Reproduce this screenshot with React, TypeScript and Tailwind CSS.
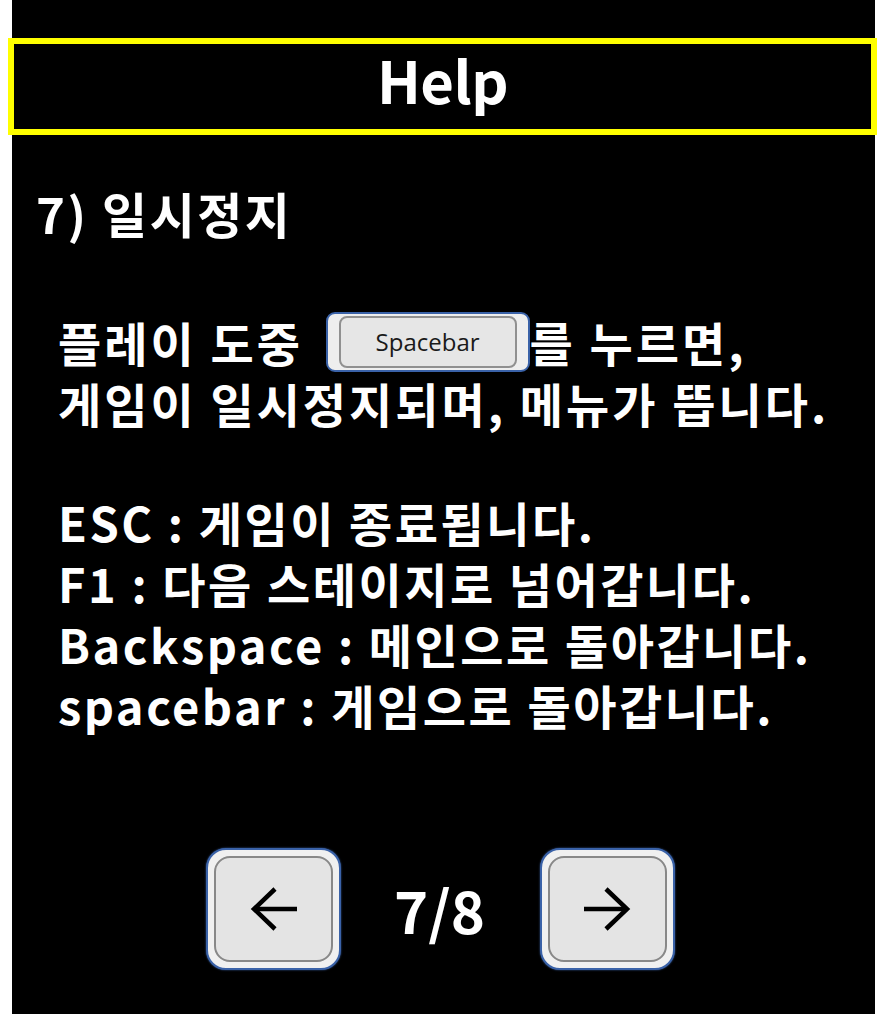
import React from "react";

const font = { fontFamily: '"Noto Sans CJK KR", "Noto Sans", sans-serif' };

function Arrow({ dir }: { dir: "left" | "right" }) {
  return (
    <svg width="50" height="44" viewBox="0 0 50 44" fill="none" stroke="#000" strokeWidth="4.5" strokeLinecap="butt" strokeLinejoin="miter">
      {dir === "left" ? (
        <>
          <path d="M48 22 H5" />
          <path d="M26 2 L5 22 L26 42" />
        </>
      ) : (
        <>
          <path d="M2 22 H45" />
          <path d="M24 2 L45 22 L24 42" />
        </>
      )}
    </svg>
  );
}

function NavButton({ dir }: { dir: "left" | "right" }) {
  return (
    <div className="w-[135px] h-[122px] rounded-[20px] border-2 border-[#3a62a8] bg-[#f0f0f0] p-[6px] shadow-[0_0_2px_#3a62a8]">
      <div className="w-full h-full rounded-[16px] border-2 border-[#888] bg-[#e4e4e4] flex items-center justify-center">
        <Arrow dir={dir} />
      </div>
    </div>
  );
}

function Key({ text }: { text: string }) {
  return <div className="h-[61px] flex items-center whitespace-pre tracking-[2.5px]">{text}</div>;
}

export default function App() {
  return (
    <div className="w-[878px] h-[1014px] bg-white flex overflow-hidden" style={font}>
      <div className="w-[12px] shrink-0" />
      <div className="w-[863px] h-full bg-black flex flex-col text-white">
        <div className="mt-[38px] -ml-[4px] -mr-[2px] h-[97px] border-[6px] border-[#ffff00] flex items-center justify-center pb-[16px]">
          <span className="text-[58px] font-bold leading-none tracking-[-0.5px]">Help</span>
        </div>
        <div className="mt-[47px] ml-[24px] h-[60px] flex items-center text-[49px] font-bold leading-none tracking-[2.5px]">
          7) 일시정지
        </div>
        <div className="mt-[69px] ml-[46px] flex flex-col text-[47px] leading-[61px] font-bold tracking-[3px]">
          <div className="h-[61px] flex items-center whitespace-pre">
            <span className="mr-[9px]">플레이 도중 </span>
            <div className="w-[204px] h-[60px] rounded-[9px] border-2 border-[#3a62a8] bg-[#eeeeee] px-[11px] py-[2px] tracking-normal">
              <div className="w-full h-full rounded-[8px] border-2 border-[#909090] bg-[#e6e6e6] flex items-center justify-center">
                <span className="text-[24px] leading-none font-normal text-[#1a1a1a]" style={{ fontFamily: '"Open Sans", "Noto Sans", sans-serif' }}>Spacebar</span>
              </div>
            </div>
            <span>를 누르면,</span>
          </div>
          <div className="h-[61px] flex items-center whitespace-pre">게임이 일시정지되며, 메뉴가 뜹니다.</div>
          <div className="h-[58px]" />
          <Key text="ESC : 게임이 종료됩니다." />
          <Key text="F1 : 다음 스테이지로 넘어갑니다." />
          <Key text="Backspace : 메인으로 돌아갑니다." />
          <Key text="spacebar : 게임으로 돌아갑니다." />
        </div>
        <div className="mt-[113px] flex items-center justify-center -ml-[6px]">
          <NavButton dir="left" />
          <div className="ml-[53px] mr-[55px] text-[58px] font-bold leading-none">7/8</div>
          <NavButton dir="right" />
        </div>
      </div>
      <div className="w-[3px] shrink-0" />
    </div>
  );
}
